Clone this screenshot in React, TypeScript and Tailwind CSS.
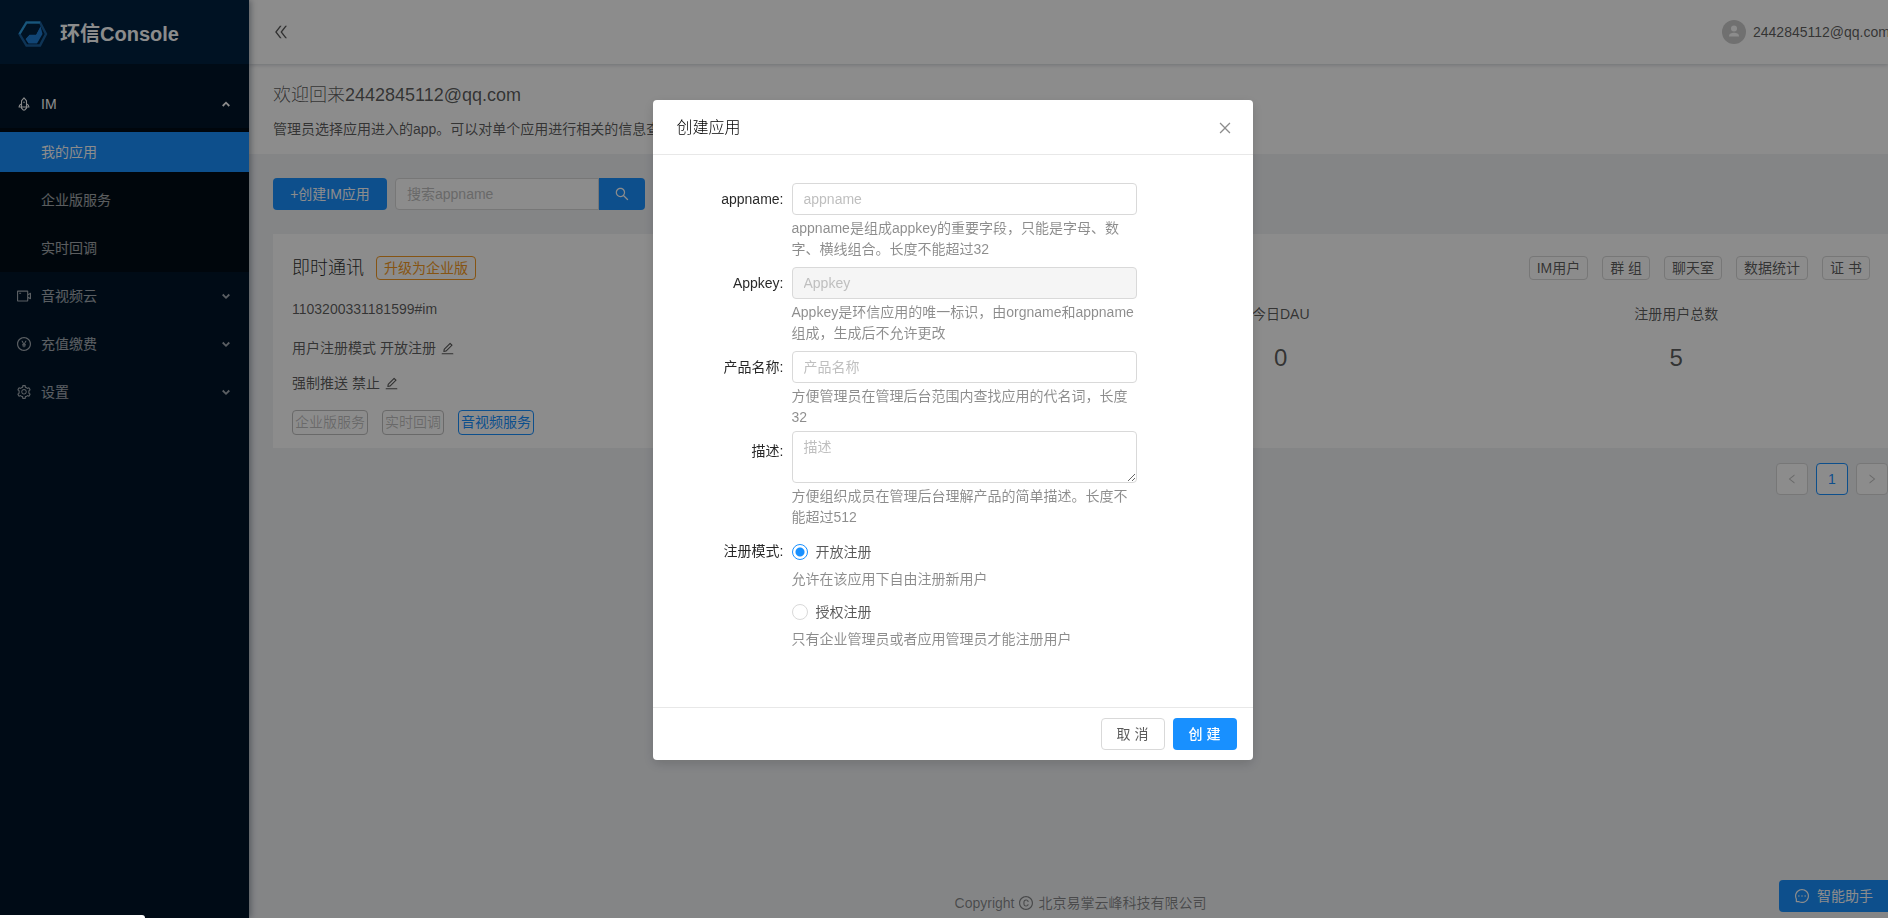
import React from "react";
import {
    AiOutlineClose,
    AiOutlineCopyright,
    AiOutlineDoubleLeft,
    AiOutlineEdit,
    AiOutlineLeft,
    AiOutlineMessage,
    AiOutlinePayCircle,
    AiOutlineRight,
    AiOutlineRocket,
    AiOutlineSearch,
    AiOutlineSetting,
    AiOutlineVideoCamera,
} from "react-icons/ai";

const account = "2442845112@qq.com";

const Logo = () => (
    <svg className="h-[26px] w-[30px]" viewBox="0 0 30 26">
        <path d="M8.500 1.500h13.500l6 11.500-6 11.500H8.500L1.500 13z" fill="none" stroke="#1b5f9c" strokeWidth="2.4" />
        <path d="M1.500 13L8.500 1.500H22" fill="none" stroke="#2d9fe0" strokeWidth="2" />
        <path d="M22.500 5L18 13.500h-6.500L7.500 18l3 4.500h8.500L24.500 13z" fill="#1f7fd6" />
        <path d="M22.500 5L13 7.500 7 14.500v3.500l4.500-4.500H18z" fill="#002140" />
    </svg>
);

const Arrow = ({ up = false }: { up?: boolean }) => (
    <svg className="h-2 w-2" viewBox="0 0 8 8" fill="none" stroke="currentColor" strokeWidth="1.8">
        <path d={up ? "M0.7 6L4 2.700 7.300 6" : "M0.7 2.500L4 5.800 7.300 2.500"} />
    </svg>
);

const subItems = ["我的应用", "企业版服务", "实时回调"];

const menuItems = [
    { label: "音视频云", icon: AiOutlineVideoCamera },
    { label: "充值缴费", icon: AiOutlinePayCircle },
    { label: "设置", icon: AiOutlineSetting },
];

const Sidebar: React.FC = () => {
    const [open, setOpen] = React.useState(true);

    return (
        <aside className="z-10 w-[249px] shrink-0 bg-[#001529] text-white/65 shadow-[2px_0_6px_rgba(0,21,41,0.35)]">
            <a href="#home" className="flex h-16 items-center gap-3 bg-[#002140] pt-1 pl-[18px] text-white">
                <Logo />
                <h1 className="text-xl font-bold">环信Console</h1>
            </a>
            <nav className="pt-4">
                <button
                    type="button"
                    onClick={() => setOpen(!open)}
                    className="flex h-12 w-full items-center gap-[9px] pr-[19px] pl-4 text-white"
                >
                    <AiOutlineRocket className="h-4 w-4" />
                    <span className="flex-1 text-left">IM</span>
                    <Arrow up={open} />
                </button>
                {open && (
                    <ul className="bg-[#000c17]">
                        {subItems.map((item, i) => (
                            <li key={item} className="py-1">
                                <a
                                    href="#app"
                                    className={i === 0 ? "flex h-10 items-center bg-[#1890ff] pl-[41px] text-white" : "flex h-10 items-center pl-[41px]"}
                                >
                                    {item}
                                </a>
                            </li>
                        ))}
                    </ul>
                )}
                {menuItems.map(({ label, icon: Icon }) => (
                    <button type="button" key={label} className="flex h-12 w-full items-center gap-[9px] pr-[19px] pl-4">
                        <Icon className="h-4 w-4" />
                        <span className="flex-1 text-left">{label}</span>
                        <Arrow />
                    </button>
                ))}
            </nav>
        </aside>
    );
};

const TopBar: React.FC = () => (
    <header className="z-[5] flex h-16 items-center justify-between bg-white pl-[23px] shadow-[0_1px_4px_rgba(0,21,41,0.2)]">
        <button type="button" aria-label="收起菜单">
            <AiOutlineDoubleLeft className="h-[18px] w-[18px]" />
        </button>
        <div className="flex items-center gap-[7px]">
            <svg className="h-6 w-6" viewBox="0 0 24 24">
                <circle cx="12" cy="12" r="12" fill="#ccc" />
                <circle cx="12" cy="8.500" r="3" fill="#fff" />
                <path d="M7 16.500c0-3 2.500-3.700 5-3.700s5 .7 5 3.700z" fill="#fff" />
            </svg>
            <span className="w-[135px] overflow-hidden whitespace-nowrap">{account}</span>
        </div>
    </header>
);

const cardLinks = ["IM用户", "群 组", "聊天室", "数据统计", "证 书"];

// the first column stays behind the dialog while it is open
const stats = [
    { label: "昨日DAU", value: 0 },
    { label: "今日DAU", value: 0 },
    { label: "注册用户总数", value: 5 },
];

const AppCard: React.FC = () => (
    <section className="flex bg-white pt-[22px] pr-[14px] pb-[13px] pl-[19px]">
        <div className="w-1/4">
            <div className="flex h-6 items-center gap-3">
                <h3 className="text-lg font-light text-black/85">即时通讯</h3>
                <button type="button" className="h-6 rounded border border-[#f59a23] px-[7px] leading-[22px] text-[#f59a23]">
                    升级为企业版
                </button>
            </div>
            <p className="mt-[19px]">1103200331181599#im</p>
            <p className="mt-[19px] flex items-center gap-1">
                用户注册模式 开放注册 <AiOutlineEdit className="h-[15px] w-[15px]" />
            </p>
            <p className="mt-[15px] flex items-center gap-1">
                强制推送 禁止 <AiOutlineEdit className="h-[15px] w-[15px]" />
            </p>
            <div className="mt-[17px] flex gap-[14px]">
                <button type="button" className="h-[25px] rounded-sm border border-[#bfbfbf] px-0.5 leading-[23px] text-black/25">企业版服务</button>
                <button type="button" className="h-[25px] rounded-sm border border-[#bfbfbf] px-0.5 leading-[23px] text-black/25">实时回调</button>
                <button type="button" className="h-[25px] rounded-sm border border-[#1890ff] px-0.5 leading-[23px] text-[#1890ff]">音视频服务</button>
            </div>
        </div>
        <div className="w-3/4">
            <div className="flex justify-end gap-[14px] pr-1">
                {cardLinks.map((link) => (
                    <button type="button" key={link} className="h-6 rounded border border-[#d9d9d9] px-[7px] leading-[22px]">
                        {link}
                    </button>
                ))}
            </div>
            <dl className="mt-6 grid grid-cols-3 text-center">
                {stats.map((stat) => (
                    <div key={stat.label}>
                        <dt>{stat.label}</dt>
                        <dd className="mt-4 text-2xl leading-9">{stat.value}</dd>
                    </div>
                ))}
            </dl>
        </div>
    </section>
);

const Pager: React.FC = () => (
    <div className="mt-[15px] flex justify-end gap-2">
        <button type="button" aria-label="上一页" className="flex h-8 w-8 items-center justify-center rounded border border-[#d9d9d9] bg-white text-black/25">
            <AiOutlineLeft className="h-3 w-3" />
        </button>
        <button type="button" className="h-8 w-8 rounded border border-[#1890ff] bg-white text-[#1890ff]">
            1
        </button>
        <button type="button" aria-label="下一页" className="flex h-8 w-8 items-center justify-center rounded border border-[#d9d9d9] bg-white text-black/25">
            <AiOutlineRight className="h-3 w-3" />
        </button>
    </div>
);

const inputClass = "block w-full rounded border border-[#d9d9d9] px-[11px] placeholder:text-[#bfbfbf] focus:outline-none";

type FieldProps = { id: string; label: string; help: string; tall?: boolean; children: React.ReactNode };

const Field: React.FC<FieldProps> = ({ id, label, help, tall, children }) => (
    <div className="flex">
        <label
            htmlFor={id}
            className={tall ? "w-[131px] shrink-0 pr-2 text-right leading-10 text-black/85" : "w-[131px] shrink-0 pr-2 text-right leading-8 text-black/85"}
        >
            {label}:
        </label>
        <div className="w-[345px]">
            {children}
            <p className="mt-[3px] leading-[21px] text-black/45">{help}</p>
        </div>
    </div>
);

const modes = [
    { label: "开放注册", help: "允许在该应用下自由注册新用户" },
    { label: "授权注册", help: "只有企业管理员或者应用管理员才能注册用户" },
];

const CreateModal: React.FC<{ onClose: () => void }> = ({ onClose }) => {
    const [mode, setMode] = React.useState(modes[0].label);

    return (
        <div className="fixed inset-0 z-50 bg-black/45 pt-[100px] pl-[17px]">
            <div role="dialog" aria-label="创建应用" className="mx-auto w-[600px] rounded bg-white shadow-[0_4px_12px_rgba(0,0,0,0.15)]">
                <div className="flex h-[55px] items-center justify-between border-b border-[#e8e8e8] pt-0.5 pr-5 pl-6">
                    <h2 className="text-base font-light text-black">创建应用</h2>
                    <button type="button" aria-label="关闭" onClick={onClose} className="text-black/45">
                        <AiOutlineClose className="h-4 w-4" />
                    </button>
                </div>
                <form className="h-[552px] px-2 pt-7">
                    <div className="flex flex-col gap-[7px]">
                        <Field id="appname" label="appname" help="appname是组成appkey的重要字段，只能是字母、数字、横线组合。长度不能超过32">
                            <input id="appname" placeholder="appname" className={`${inputClass} h-8`} />
                        </Field>
                        <Field id="appkey" label="Appkey" help="Appkey是环信应用的唯一标识，由orgname和appname组成，生成后不允许更改">
                            <input id="appkey" placeholder="Appkey" disabled className={`${inputClass} h-8 bg-[#f5f5f5]`} />
                        </Field>
                        <Field id="product" label="产品名称" help="方便管理员在管理后台范围内查找应用的代名词，长度32">
                            <input id="product" placeholder="产品名称" className={`${inputClass} h-8`} />
                        </Field>
                    </div>
                    <div className="mt-[3px]">
                        <Field id="desc" label="描述" tall help="方便组织成员在管理后台理解产品的简单描述。长度不能超过512">
                            <textarea id="desc" placeholder="描述" className={`${inputClass} h-[52px] resize-y py-[5px] leading-[21px]`} />
                        </Field>
                    </div>
                    <fieldset className="mt-[11px] flex">
                        <legend className="float-left w-[131px] pr-2 text-right leading-6 text-black/85">注册模式:</legend>
                        <div className="flex flex-col gap-[9px]">
                            {modes.map((item) => (
                                <div key={item.label}>
                                    <label className="flex h-[26px] items-center gap-2">
                                        <input
                                            type="radio"
                                            name="mode"
                                            checked={mode === item.label}
                                            onChange={() => setMode(item.label)}
                                            className="h-4 w-4 appearance-none rounded-full border border-[#d9d9d9] bg-white checked:border-[#1890ff] checked:bg-[radial-gradient(circle,#1890ff_4px,#fff_5px)]"
                                        />
                                        {item.label}
                                    </label>
                                    <p className="mt-1 leading-[21px] text-black/45">{item.help}</p>
                                </div>
                            ))}
                        </div>
                    </fieldset>
                </form>
                <div className="flex justify-end gap-2 border-t border-[#e8e8e8] px-4 py-2.5">
                    <button type="button" onClick={onClose} className="h-8 w-16 rounded border border-[#d9d9d9]">
                        取 消
                    </button>
                    <button type="button" className="h-8 w-16 rounded bg-[#1890ff] font-medium text-white">
                        创 建
                    </button>
                </div>
            </div>
        </div>
    );
};

export default function App() {
    const [showModal, setShowModal] = React.useState(true);

    return (
        <div className="flex min-h-screen bg-[#f0f2f5] font-['Liberation_Sans','Noto_Sans_CJK_SC',sans-serif] text-sm text-black/65">
            <Sidebar />
            <div className="flex min-w-0 flex-1 flex-col">
                <TopBar />
                <div className="h-[90px] bg-white pt-[17px] pl-6">
                    <h2 className="text-lg font-light">欢迎回来{account}</h2>
                    <p className="mt-2.5">管理员选择应用进入的app。可以对单个应用进行相关的信息查看和操作。</p>
                </div>
                <main className="pt-6 pl-6">
                    <div className="mb-6 flex gap-2">
                        <button type="button" onClick={() => setShowModal(true)} className="h-8 w-[114px] rounded bg-[#1890ff] text-white">
                            +创建IM应用
                        </button>
                        <div className="flex">
                            <input
                                aria-label="搜索appname"
                                placeholder="搜索appname"
                                className="h-8 w-[204px] rounded-l border border-[#d9d9d9] bg-white px-[11px] placeholder:text-[#bfbfbf] focus:outline-none"
                            />
                            <button type="button" aria-label="搜索" className="flex h-8 w-[46px] items-center justify-center rounded-r bg-[#1890ff] text-white">
                                <AiOutlineSearch className="h-4 w-4" />
                            </button>
                        </div>
                    </div>
                    <AppCard />
                    <Pager />
                </main>
                <footer className="mt-auto flex items-center justify-center gap-1 pb-[5px] pl-6 text-black/45">
                    Copyright <AiOutlineCopyright className="h-4 w-4" /> 北京易掌云峰科技有限公司
                </footer>
            </div>
            <button type="button" className="fixed right-0 bottom-1.5 z-20 flex h-8 w-[109px] items-center gap-[7px] rounded-l bg-[#1890ff] pl-[15px] text-white">
                <AiOutlineMessage className="h-4 w-4" />
                智能助手
            </button>
            {showModal && <CreateModal onClose={() => setShowModal(false)} />}
            <div className="fixed bottom-0 left-0 z-[60] h-[3px] w-[145px] rounded-tr bg-white" />
        </div>
    );
}
